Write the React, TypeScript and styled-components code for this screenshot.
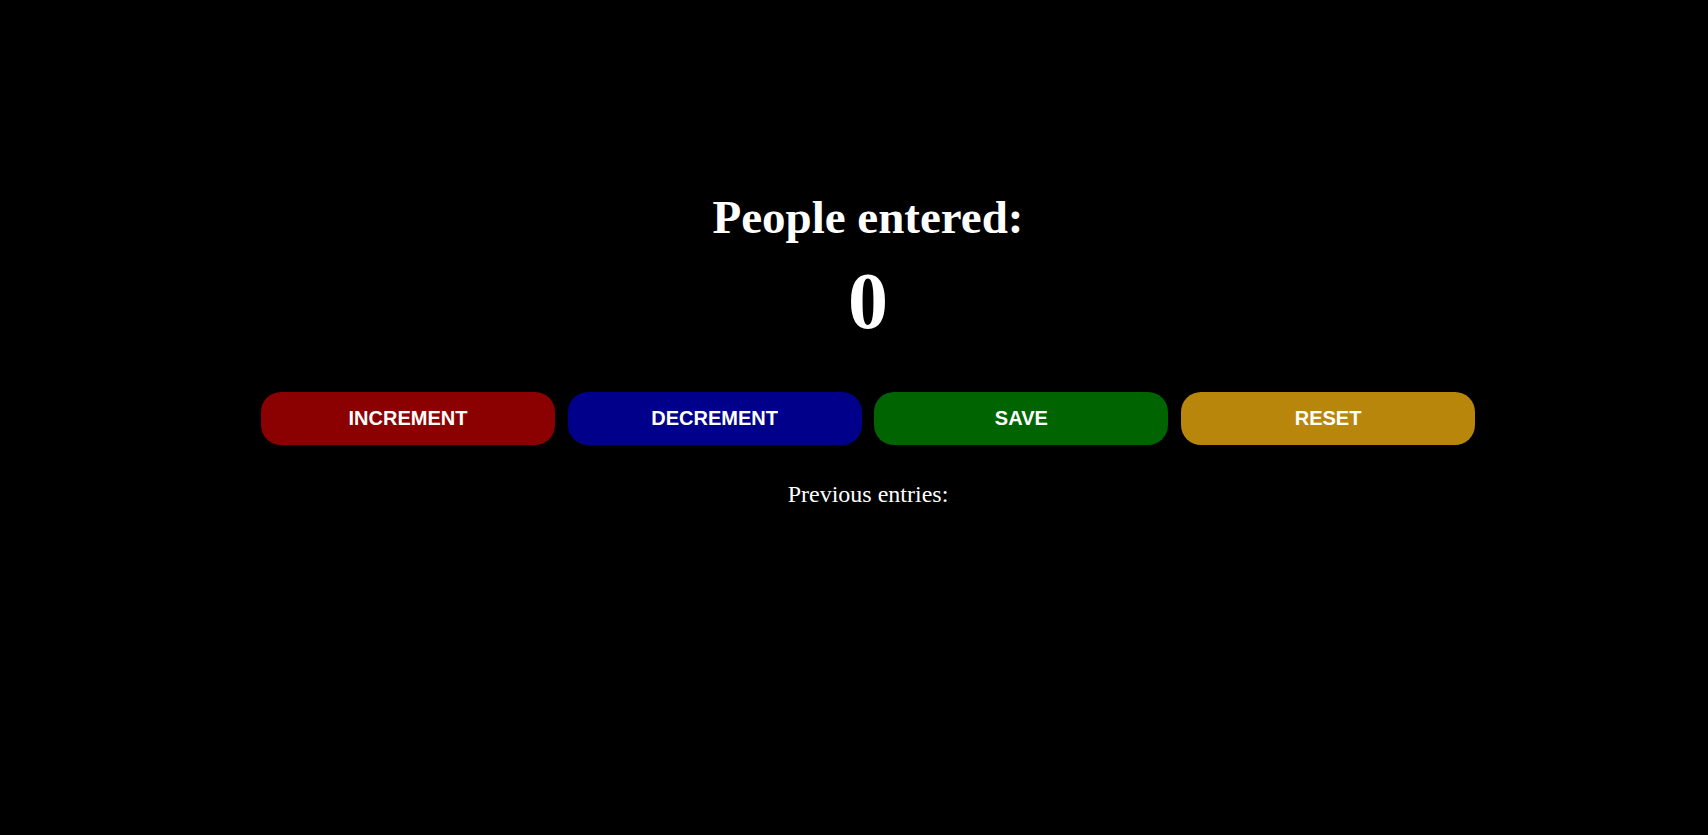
import React, { useState } from "react";
import styled, { createGlobalStyle } from "styled-components";

const GlobalStyle = createGlobalStyle`
  html, body {
    margin: 0;
    padding: 0;
    background: #000;
  }
  body {
    font-family: "Liberation Serif", "Times New Roman", serif;
    color: #fff;
  }
`;

const App: React.FC = () => {
  const [count, setCount] = useState(0);
  const [entries, setEntries] = useState<number[]>([]);

  return (
    <Container>
      <GlobalStyle />
      <Title>People entered:</Title>
      <Count>{count}</Count>
      <ButtonRow>
        <Button $bg="#8b0000" onClick={() => setCount(count + 1)}>
          INCREMENT
        </Button>
        <Button $bg="#00008b" onClick={() => setCount(Math.max(0, count - 1))}>
          DECREMENT
        </Button>
        <Button
          $bg="#006400"
          onClick={() => {
            setEntries([...entries, count]);
            setCount(0);
          }}
        >
          SAVE
        </Button>
        <Button
          $bg="#b8860b"
          onClick={() => {
            setCount(0);
            setEntries([]);
          }}
        >
          RESET
        </Button>
      </ButtonRow>
      <Entries>
        Previous entries:{entries.length > 0 && " " + entries.join(" - ")}
      </Entries>
    </Container>
  );
};

const Container = styled.div`
  min-height: 835px;
  padding-left: 28px;
  display: flex;
  flex-direction: column;
  align-items: center;
  text-align: center;
  box-sizing: border-box;
`;

const Title = styled.h1`
  margin: 190px 0 0;
  font-size: 47px;
  line-height: 54px;
  font-weight: bold;
`;

const Count = styled.h2`
  margin: 11px 0 0;
  font-size: 80px;
  line-height: 92px;
  font-weight: bold;
`;

const ButtonRow = styled.div`
  margin-top: 45px;
  display: flex;
  gap: 12.7px;
`;

const Button = styled.button<{ $bg: string }>`
  width: 294px;
  height: 53px;
  border: none;
  border-radius: 20px;
  background: ${(p) => p.$bg};
  color: #fff;
  font-family: "Liberation Sans", Arial, sans-serif;
  font-weight: bold;
  font-size: 20px;
  cursor: pointer;
`;

const Entries = styled.p`
  margin: 35px 0 0;
  font-size: 24px;
  line-height: 28px;
`;

export default App;
